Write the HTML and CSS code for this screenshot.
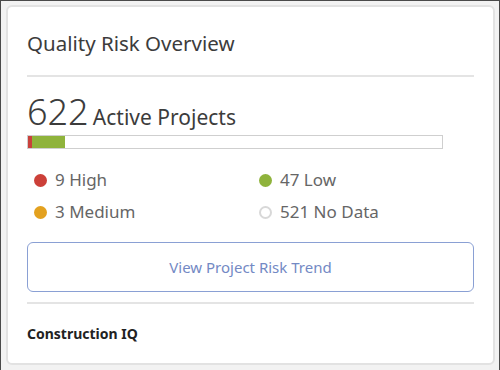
FILE: index.html
```html
<!DOCTYPE html>
<html lang="en">
<head>
    <meta charset="UTF-8">
    <title>Quality Risk Overview</title>
    <link rel="stylesheet" href="styles.css">
</head>
<body>

<div class="frame">
    <div class="card">
        <h1 class="card-title">Quality Risk Overview</h1>

        <div class="total">
            <span class="total-count">622</span>
            <span class="total-label">Active Projects</span>
        </div>
        <div class="risk-bar">
            <div class="seg seg-high" style="width: 1%"></div>
            <div class="seg seg-low" style="width: 8%"></div>
        </div>

        <div class="legend">
            <div class="legend-item"><span class="dot dot-high"></span>9 High</div>
            <div class="legend-item"><span class="dot dot-low"></span>47 Low</div>
            <div class="legend-item"><span class="dot dot-medium"></span>3 Medium</div>
            <div class="legend-item"><span class="dot dot-none"></span>521 No Data</div>
        </div>

        <button class="trend-btn">View Project Risk Trend</button>

        <div class="card-footer">Construction IQ</div>
    </div>
</div>

</body>
</html>
```

FILE: styles.css
```css
html, body {
    margin: 0;
    height: 100%;
}
body {
    font-family: "Noto Sans", "Open Sans", sans-serif;
    background: #4a4a4a;
}
.frame {
    box-sizing: border-box;
    height: 370px;
    padding: 4px 4px 5px 5px;
    margin: 0 1px 0 1px;
    background: #f2f2f2;
    border-top: 1px solid #4a4a4a;
}
.card {
    box-sizing: border-box;
    height: 100%;
    background: #fff;
    border: 2px solid #e2e2e2;
    border-radius: 6px;
    padding: 0 19px 0 19px;
}
.card-title {
    margin: 0;
    padding: 22px 0 18px;
    font-size: 20.5px;
    font-weight: 400;
    color: #3c3c3c;
    border-bottom: 2px solid #e4e4e4;
}
.total {
    margin-top: 17px;
    color: #3c3c3c;
    line-height: 1;
}
.total-count {
    font-size: 36px;
    font-weight: 300;
}
.total-label {
    font-size: 21px;
}
.risk-bar {
    display: flex;
    width: 414px;
    height: 12px;
    margin-top: 5px;
    border: 1px solid #cfcfcf;
}
.seg-high {
    background: #c9413b;
}
.seg-low {
    background: #8fb33c;
}
.legend {
    display: grid;
    grid-template-columns: 225px 1fr;
    row-gap: 10px;
    margin: 20px 0 0 7px;
}
.legend-item {
    display: flex;
    align-items: center;
    gap: 8px;
    font-size: 17px;
    color: #666;
    line-height: 22px;
}
.dot {
    box-sizing: border-box;
    width: 13px;
    height: 13px;
    border-radius: 50%;
}
.dot-high {
    background: #cc4039;
}
.dot-low {
    background: #8fb33c;
}
.dot-medium {
    background: #e3a11f;
}
.dot-none {
    border: 2px solid #d8d8d8;
}
.trend-btn {
    display: block;
    width: 100%;
    height: 50px;
    margin-top: 19px;
    background: #fff;
    border: 1px solid #8aa0d4;
    border-radius: 6px;
    font-family: inherit;
    font-size: 15px;
    color: #7389c4;
    cursor: pointer;
}
.card-footer {
    margin-top: 10px;
    padding-top: 20px;
    border-top: 2px solid #e4e4e4;
    font-size: 14px;
    font-weight: 700;
    color: #222;
}
```
